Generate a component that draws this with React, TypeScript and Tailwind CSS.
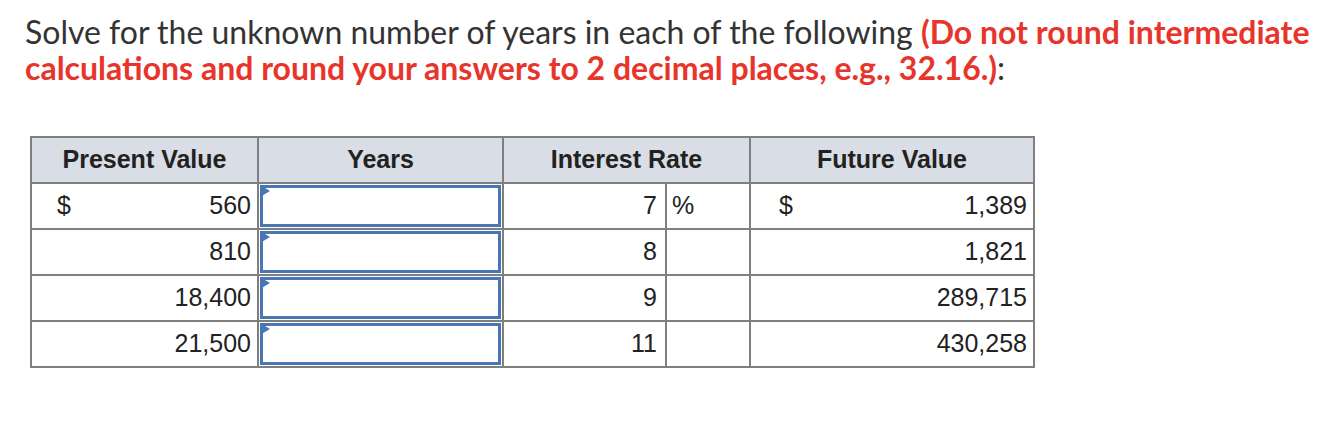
const rows = [
  { pv: "560", rate: "7", fv: "1,389", first: true },
  { pv: "810", rate: "8", fv: "1,821" },
  { pv: "18,400", rate: "9", fv: "289,715" },
  { pv: "21,500", rate: "11", fv: "430,258" },
];

function YearsInput() {
  return (
    <div className="relative h-full bg-white p-px">
      <input
        type="text"
        className="block h-full w-full border-[3px] border-[#4a76b6] bg-white outline-none"
      />
      {/* little blue flag on the top-left corner */}
      <span className="absolute left-[1px] top-[1px] h-0 w-0 border-y-[6px] border-l-[10px] border-y-transparent border-l-[#4a76b6]" />
    </div>
  );
}

export default function App() {
  return (
    <div className="min-h-[426px] bg-white">
      <p
        className="pl-[25px] pt-[14px] text-[32px] leading-[36px] text-[#333333]"
        style={{ fontFamily: "Lato, 'Open Sans', sans-serif" }}
      >
        Solve for the unknown number of years in each of the following{" "}
        <strong className="font-bold text-[#e8352b]">(Do not round intermediate</strong>
        <br />
        <strong className="font-bold text-[#e8352b]">
          calculations and round your answers to 2 decimal places, e.g., 32.16.)
        </strong>
        :
      </p>

      <div
        className="ml-[30px] mt-[50px] grid w-fit grid-cols-[225px_243px_161px_82px_282px] auto-rows-[44px] gap-[2px] bg-[#7f7f7f] p-[2px] text-[25px] text-[#222222]"
        style={{ fontFamily: "'Liberation Sans', Arial, sans-serif" }}
      >
        <div className="flex items-center justify-center bg-[#d9dde5] font-bold">Present Value</div>
        <div className="flex items-center justify-center bg-[#d9dde5] font-bold">Years</div>
        <div className="col-span-2 flex items-center justify-center bg-[#d9dde5] font-bold">Interest Rate</div>
        <div className="flex items-center justify-center bg-[#d9dde5] font-bold">Future Value</div>

        {rows.map((r) => (
          <div key={r.pv} className="contents">
            <div className="flex items-center justify-between bg-white pl-[25px] pr-[6px]">
              <span>{r.first ? "$" : ""}</span>
              <span>{r.pv}</span>
            </div>
            <YearsInput />
            <div className="flex items-center justify-end bg-white pr-[8px]">{r.rate}</div>
            <div className="flex items-center bg-white pl-[5px]">{r.first ? "%" : ""}</div>
            <div className="flex items-center justify-between bg-white pl-[28px] pr-[6px]">
              <span>{r.first ? "$" : ""}</span>
              <span>{r.fv}</span>
            </div>
          </div>
        ))}
      </div>
    </div>
  );
}
